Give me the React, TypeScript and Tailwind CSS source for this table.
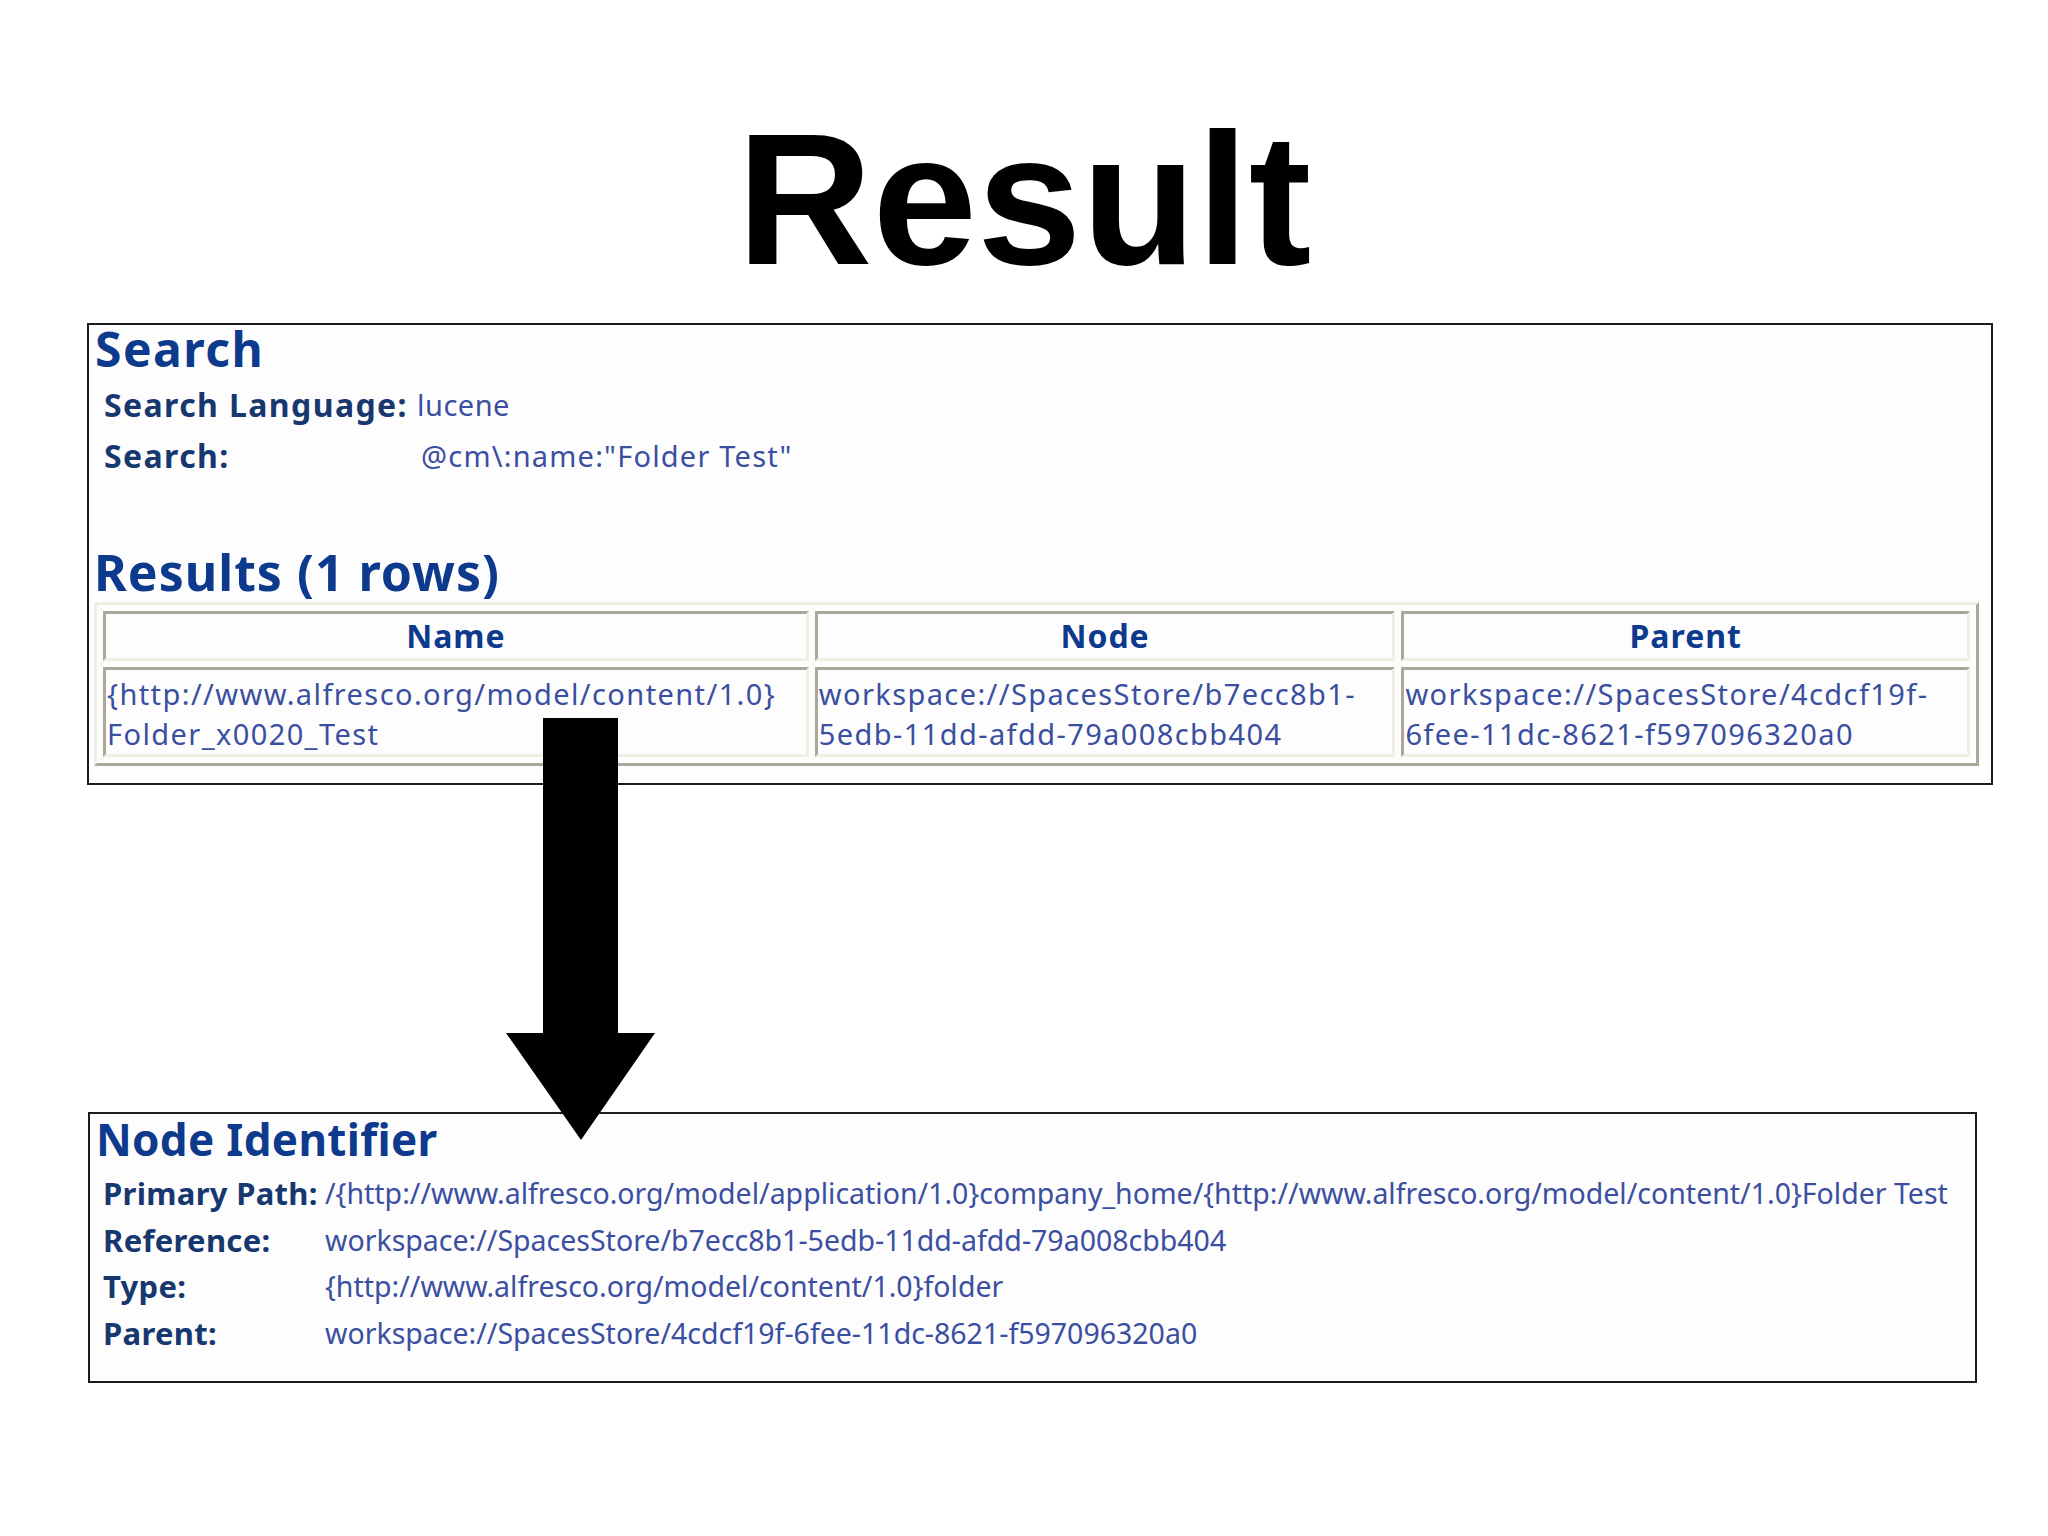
import React from "react";

const cellHead =
  "p-0 h-[50px] border-[3px] border-t-[#aca899] border-l-[#aca899] border-b-[#f1efe2] border-r-[#f1efe2] text-center font-bold text-[32px] tracking-[1px] leading-[44px] text-[#0d3a8c]";
const cellBody =
  "pt-[4px] pb-0 pl-[1px] pr-0 align-top border-[3px] border-t-[#aca899] border-l-[#aca899] border-b-[#f1efe2] border-r-[#f1efe2] text-[29px] tracking-[1.4px] leading-[40px] text-[#3b4fa0] whitespace-nowrap";

interface Field {
  label: string;
  value: string;
}

const nodeFields: Field[] = [
  {
    label: "Primary Path:",
    value:
      "/{http://www.alfresco.org/model/application/1.0}company_home/{http://www.alfresco.org/model/content/1.0}Folder Test",
  },
  {
    label: "Reference:",
    value: "workspace://SpacesStore/b7ecc8b1-5edb-11dd-afdd-79a008cbb404",
  },
  { label: "Type:", value: "{http://www.alfresco.org/model/content/1.0}folder" },
  {
    label: "Parent:",
    value: "workspace://SpacesStore/4cdcf19f-6fee-11dc-8621-f597096320a0",
  },
];

function DownArrow() {
  return (
    <svg
      className="absolute left-[506px] top-[718px]"
      width="149"
      height="422"
      viewBox="0 0 149 422"
    >
      <path d="M37 0 H112 V315 H149 L75 422 L0 315 H37 Z" fill="#000" />
    </svg>
  );
}

export default function App() {
  return (
    <div className="relative w-[2048px] h-[1536px] bg-white overflow-hidden">
      <h1 className="pt-[105px] text-center font-['Liberation_Sans',Arial,sans-serif] font-bold text-[188px] leading-none text-black">
        Result
      </h1>

      {/* search panel */}
      <div className="mt-[30px] ml-[87px] w-[1906px] h-[462px] border-2 border-[#1c1c1c] bg-[#fdfdfe] font-['Noto_Sans',sans-serif]">
        <h2 className="pl-[6px] font-bold text-[48px] tracking-[1.5px] leading-none text-[#0d3a8c]">
          Search
        </h2>
        <div className="mt-[6px] ml-[15px]">
          <div className="flex h-[51px] leading-[51px]">
            <span className="w-[313px] font-bold text-[32px] tracking-[1.4px] text-[#17376f]">
              Search Language:
            </span>
            <span className="text-[29px] tracking-[0.5px] text-[#3b4fa0]">lucene</span>
          </div>
          <div className="flex h-[51px] leading-[51px]">
            <span className="w-[313px] font-bold text-[32px] tracking-[1.4px] text-[#17376f]">
              Search:
            </span>
            <span className="ml-[4px] text-[29px] tracking-[1.2px] text-[#3b4fa0]">
              {'@cm\\:name:"Folder Test"'}
            </span>
          </div>
        </div>
        <h2 className="mt-[61px] pl-[5px] font-bold text-[50px] tracking-[1px] leading-[60px] text-[#0d3a8c]">
          Results (1 rows)
        </h2>
        <table className="ml-[5px] w-[1885px] table-fixed border-separate border-spacing-[6px] border-[3px] border-t-[#f1efe2] border-l-[#f1efe2] border-b-[#aca899] border-r-[#aca899]">
          <thead>
            <tr>
              <th className={`${cellHead} w-[705px]`}>Name</th>
              <th className={`${cellHead} w-[580px]`}>Node</th>
              <th className={`${cellHead} w-[568px]`}>Parent</th>
            </tr>
          </thead>
          <tbody>
            <tr>
              <td className={cellBody}>
                {"{http://www.alfresco.org/model/content/1.0}"}
                <br />
                Folder_x0020_Test
              </td>
              <td className={cellBody}>
                workspace://SpacesStore/b7ecc8b1-
                <br />
                5edb-11dd-afdd-79a008cbb404
              </td>
              <td className={cellBody}>
                workspace://SpacesStore/4cdcf19f-
                <br />
                6fee-11dc-8621-f597096320a0
              </td>
            </tr>
          </tbody>
        </table>
      </div>

      {/* node identifier panel */}
      <div className="mt-[327px] ml-[88px] w-[1889px] h-[271px] border-2 border-[#1c1c1c] bg-[#fdfdfe] font-['Noto_Sans',sans-serif]">
        <h2 className="mt-[3px] pl-[6px] font-bold text-[44px] tracking-[0.3px] leading-none text-[#0d3a8c]">
          Node Identifier
        </h2>
        <div className="mt-[9px] ml-[13px]">
          {nodeFields.map((f) => (
            <div key={f.label} className="flex h-[46.5px] leading-[46.5px]">
              <span className="w-[222px] shrink-0 font-bold text-[31px] tracking-[0.3px] text-[#17376f]">
                {f.label}
              </span>
              <span className="whitespace-nowrap text-[28.5px] text-[#3b4fa0]">
                {f.value}
              </span>
            </div>
          ))}
        </div>
      </div>

      <DownArrow />
    </div>
  );
}
